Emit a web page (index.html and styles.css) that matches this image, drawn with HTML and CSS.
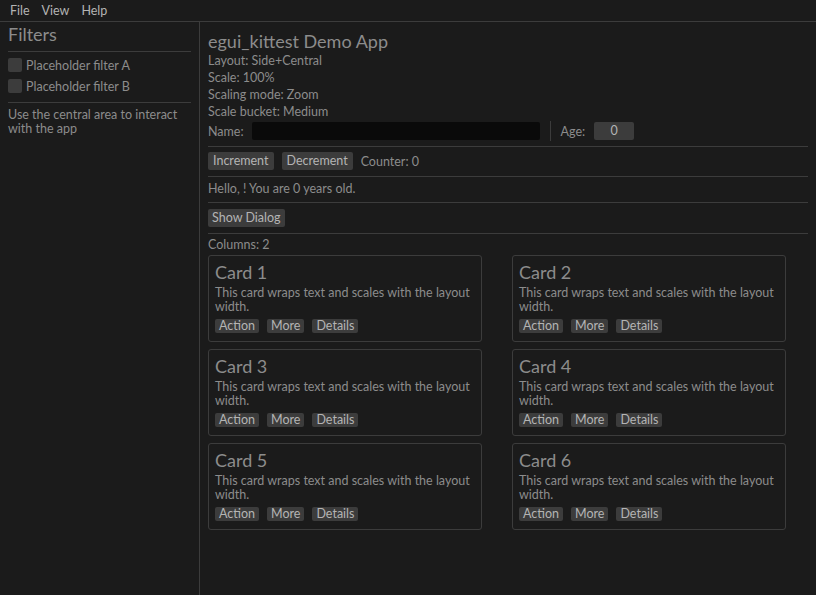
FILE: index.html
```html
<!DOCTYPE html>
<html>
<head>
<meta charset="utf-8">
<link rel="stylesheet" href="styles.css">
</head>
<body>
<div class="menubar">
  <span class="menu-item">File</span>
  <span class="menu-item">View</span>
  <span class="menu-item">Help</span>
</div>
<div class="main">
  <aside class="side">
    <div class="heading">Filters</div>
    <div class="sep sep-a"></div>
    <label class="check-row"><span class="checkbox"></span><span>Placeholder filter A</span></label>
    <label class="check-row"><span class="checkbox"></span><span>Placeholder filter B</span></label>
    <div class="sep sep-b"></div>
    <p class="side-note">Use the central area to interact with the app</p>
  </aside>
  <main class="central">
    <div class="heading">egui_kittest Demo App</div>
    <div class="line">Layout: Side+Central</div>
    <div class="line">Scale: 100%</div>
    <div class="line">Scaling mode: Zoom</div>
    <div class="line">Scale bucket: Medium</div>
    <div class="name-row">
      <span class="label">Name:</span>
      <span class="text-edit"></span>
      <span class="vsep"></span>
      <span class="label">Age:</span>
      <span class="drag-value">0</span>
    </div>
    <div class="sep sep-1"></div>
    <div class="btn-row">
      <span class="btn wide">Increment</span>
      <span class="btn wide">Decrement</span>
      <span class="label">Counter: 0</span>
    </div>
    <div class="sep sep-2"></div>
    <div class="line hello">Hello, ! You are 0 years old.</div>
    <div class="sep sep-3"></div>
    <div class="btn-row"><span class="btn">Show Dialog</span></div>
    <div class="sep sep-4"></div>
    <div class="line columns">Columns: 2</div>
    <div class="cards">
      <div class="card">
        <div class="card-title">Card 1</div>
        <div class="card-text">This card wraps text and scales with the layout width.</div>
        <div class="card-actions"><span class="btn small">Action</span><span class="btn small">More</span><span class="btn small">Details</span></div>
      </div>
      <div class="card">
        <div class="card-title">Card 2</div>
        <div class="card-text">This card wraps text and scales with the layout width.</div>
        <div class="card-actions"><span class="btn small">Action</span><span class="btn small">More</span><span class="btn small">Details</span></div>
      </div>
      <div class="card">
        <div class="card-title">Card 3</div>
        <div class="card-text">This card wraps text and scales with the layout width.</div>
        <div class="card-actions"><span class="btn small">Action</span><span class="btn small">More</span><span class="btn small">Details</span></div>
      </div>
      <div class="card">
        <div class="card-title">Card 4</div>
        <div class="card-text">This card wraps text and scales with the layout width.</div>
        <div class="card-actions"><span class="btn small">Action</span><span class="btn small">More</span><span class="btn small">Details</span></div>
      </div>
      <div class="card">
        <div class="card-title">Card 5</div>
        <div class="card-text">This card wraps text and scales with the layout width.</div>
        <div class="card-actions"><span class="btn small">Action</span><span class="btn small">More</span><span class="btn small">Details</span></div>
      </div>
      <div class="card">
        <div class="card-title">Card 6</div>
        <div class="card-text">This card wraps text and scales with the layout width.</div>
        <div class="card-actions"><span class="btn small">Action</span><span class="btn small">More</span><span class="btn small">Details</span></div>
      </div>
    </div>
  </main>
</div>
</body>
</html>
```

FILE: styles.css
```css
* { box-sizing: border-box; }
html, body {
  margin: 0;
  padding: 0;
  width: 816px;
  height: 595px;
  overflow: hidden;
  background: #1b1b1b;
  color: #8c8c8c;
  font-family: Lato, "Noto Sans", sans-serif;
  font-size: 12.5px;
}
.menubar {
  height: 22px;
  border-bottom: 1px solid #3c3c3c;
  display: flex;
  align-items: center;
  padding-left: 10px;
  gap: 12px;
}
.menu-item {
  color: #b4b4b4;
  line-height: 17px;
}
.main {
  display: flex;
  height: 573px;
}
.side {
  width: 200px;
  border-right: 1px solid #3c3c3c;
  padding: 1px 8px 0 8px;
  flex: none;
}
.heading {
  font-size: 18px;
  line-height: 22px;
}
.sep {
  height: 1px;
  background: #3c3c3c;
}
.sep-a { margin-top: 6px; margin-bottom: 4px; }
.check-row {
  display: flex;
  align-items: center;
  gap: 4px;
  height: 18px;
  margin-bottom: 3px;
}
.checkbox {
  width: 14px;
  height: 14px;
  border-radius: 2px;
  background: #3c3c3c;
  flex: none;
}
.sep-b { margin-top: 7px; margin-bottom: 5px; }
.side-note {
  margin: 0;
  line-height: 14px;
}
.central {
  flex: 1;
  padding: 8px 8px 0 8px;
}
.line {
  line-height: 17px;
}
.name-row {
  display: flex;
  align-items: center;
  height: 18px;
  margin-top: 2px;
}
.label { line-height: 17px; }
.text-edit {
  width: 288px;
  height: 18px;
  background: #0a0a0a;
  border-radius: 2px;
  margin-left: 8px;
}
.vsep {
  width: 1px;
  height: 20px;
  background: #3c3c3c;
  margin: 0 10px 0 10px;
}
.drag-value {
  width: 40px;
  height: 18px;
  margin-left: 9px;
  background: #3c3c3c;
  border-radius: 2px;
  color: #b4b4b4;
  text-align: center;
  line-height: 18px;
}
.sep-1 { margin-top: 6px; margin-bottom: 5px; }
.btn-row {
  display: flex;
  align-items: center;
  gap: 8px;
  height: 18px;
}
.btn {
  background: #3c3c3c;
  color: #b4b4b4;
  border-radius: 2px;
  padding: 0 4px;
  height: 18px;
  line-height: 18px;
  white-space: nowrap;
}
.btn.wide { padding: 0 5px; }
.sep-2 { margin-top: 6px; }
.hello { margin-top: 3px; margin-bottom: 5px; }
.sep-3 { margin-bottom: 6px; }
.sep-4 { margin-top: 6px; }
.columns { margin-top: 2px; }
.cards {
  display: grid;
  grid-template-columns: 274px 274px;
  column-gap: 30px;
  row-gap: 7px;
  margin-top: 2px;
}
.card {
  height: 87px;
  border: 1px solid #3c3c3c;
  border-radius: 3px;
  padding: 5px 6px 8px 6px;
}
.card-title {
  font-size: 18px;
  line-height: 22px;
}
.card-text {
  margin-top: 3px;
  line-height: 14px;
}
.card-actions {
  display: flex;
  gap: 8px;
  margin-top: 5px;
}
.btn.small {
  height: 14px;
  line-height: 14px;
}
```
